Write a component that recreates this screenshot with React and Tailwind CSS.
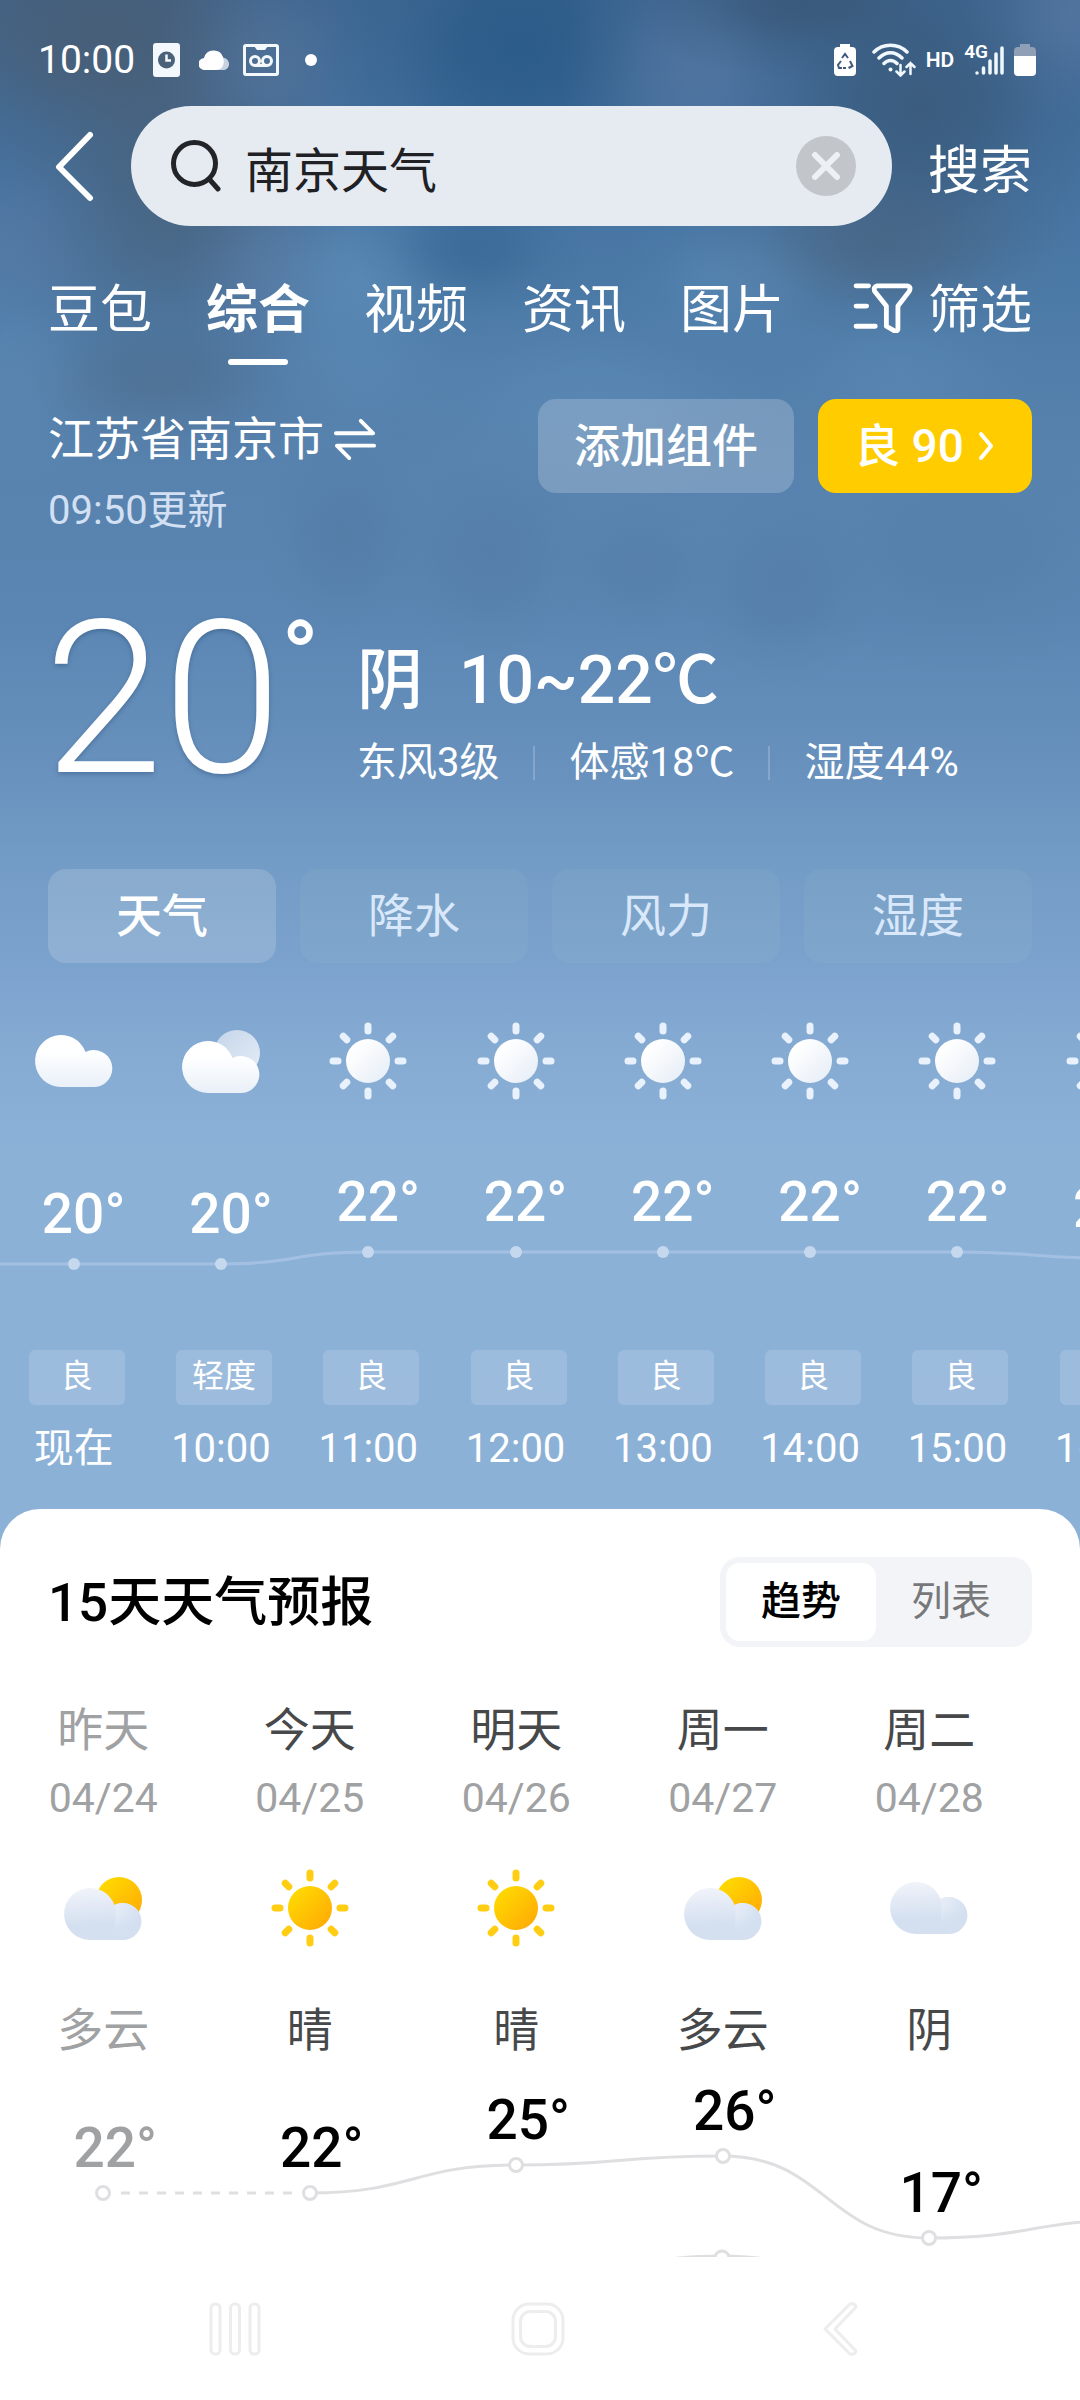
import React, { useState } from 'react';

const tabs = ['豆包', '综合', '视频', '资讯', '图片'];

const metrics = ['天气', '降水', '风力', '湿度'];

// drop: distance of the temperature from the top of the trend area
const hours = [
    { time: '现在', icon: 'cloud', temp: 20, air: '良', drop: 75 },
    { time: '10:00', icon: 'partly', temp: 20, air: '轻度', drop: 75 },
    { time: '11:00', icon: 'sun', temp: 22, air: '良', drop: 63 },
    { time: '12:00', icon: 'sun', temp: 22, air: '良', drop: 63 },
    { time: '13:00', icon: 'sun', temp: 22, air: '良', drop: 63 },
    { time: '14:00', icon: 'sun', temp: 22, air: '良', drop: 63 },
    { time: '15:00', icon: 'sun', temp: 22, air: '良', drop: 63 },
    { time: '16:00', icon: 'sun', temp: 21, air: '良', drop: 69 },
];

const days = [
    { name: '昨天', date: '04/24', icon: 'partly', text: '多云', high: 22, drop: 58, past: true },
    { name: '今天', date: '04/25', icon: 'sun', text: '晴', high: 22, drop: 58 },
    { name: '明天', date: '04/26', icon: 'sun', text: '晴', high: 25, drop: 30 },
    { name: '周一', date: '04/27', icon: 'partly', text: '多云', high: 26, drop: 21 },
    { name: '周二', date: '04/28', icon: 'cloud', text: '阴', high: 17, drop: 103 },
];

const Gradients = () => (
    <svg className="absolute h-0 w-0" aria-hidden="true">
        <defs>
            <linearGradient id="lightCloud" x1="0" y1="0" x2="0" y2="1">
                <stop offset="0.3" stopColor="#ffffff" />
                <stop offset="1" stopColor="#e9f0f8" />
            </linearGradient>
            <linearGradient id="lightSun" x1="0" y1="0" x2="1" y2="1">
                <stop offset="0.2" stopColor="#ffffff" />
                <stop offset="1" stopColor="#e4ecf6" />
            </linearGradient>
            <linearGradient id="lightMoon" x1="0" y1="0" x2="1" y2="1">
                <stop offset="0" stopColor="#c3d5ea" />
                <stop offset="1" stopColor="#e6edf6" />
            </linearGradient>
            <linearGradient id="colorCloud" x1="0.3" y1="0" x2="0.4" y2="1">
                <stop offset="0" stopColor="#f1f3fa" />
                <stop offset="0.7" stopColor="#d4e0f0" />
            </linearGradient>
            <linearGradient id="colorLobe" x1="0" y1="0.2" x2="0.7" y2="0.8">
                <stop offset="0" stopColor="#e6ecf7" />
                <stop offset="0.9" stopColor="#d2dfef" />
            </linearGradient>
            <linearGradient id="colorSun" x1="0.1" y1="0.1" x2="0.9" y2="0.9">
                <stop offset="0" stopColor="#ffdb00" />
                <stop offset="1" stopColor="#ffab06" />
            </linearGradient>
            <linearGradient id="lobeFade" x1="0" y1="0" x2="0" y2="1">
                <stop offset="0.3" stopColor="#ffffff" />
                <stop offset="0.8" stopColor="#000000" />
            </linearGradient>
            <mask id="lobeMask">
                <rect x="44" y="34" width="50" height="42" fill="url(#lobeFade)" />
            </mask>
        </defs>
    </svg>
);

const CLOUD = 'M35 74a26 26 0 1 1 24.5-35a18.5 18.5 0 1 1 9 35z';

const WeatherIcon = ({ name, color }) => (
    <svg className="h-24 w-24 shrink-0" viewBox="0 0 96 96" aria-hidden="true">
        {name === 'sun' && (
            <g>
                <circle cx="48" cy="48" r="22" fill={color ? 'url(#colorSun)' : 'url(#lightSun)'} />
                <g stroke={color ? '#ffce12' : '#e8f1fc'} strokeWidth="7" strokeLinecap="round">
                    {[0, 45, 90, 135, 180, 225, 270, 315].map((deg) => (
                        <path key={deg} d="M48 13v5" transform={`rotate(${deg} 48 48)`} />
                    ))}
                </g>
            </g>
        )}
        {name === 'partly' && <circle cx="64" cy="40" r="23" fill={color ? 'url(#colorSun)' : 'url(#lightMoon)'} />}
        {name !== 'sun' && (
            <g transform={name === 'partly' ? 'translate(0 6)' : undefined}>
                <path d={CLOUD} fill={color ? 'url(#colorCloud)' : 'url(#lightCloud)'} />
                {color && <path d="M59.5 39a18.5 18.5 0 1 1 9 35c-8 0-9-8-8.5-20a30 30 0 0 0-.5-15z" fill="url(#colorLobe)" mask="url(#lobeMask)" />}
            </g>
        )}
    </svg>
);

const Sky = () => (
    <svg className="absolute inset-x-0 top-0 h-[900px] w-full" viewBox="0 0 1080 900" preserveAspectRatio="none" aria-hidden="true">
        <defs>
            {[
                ['skyGrey', '#4a5a6c'],
                ['skyDeep', '#235583'],
                ['skyDark', '#375472'],
                ['skyHaze', '#6280a8'],
                ['skyLight', '#6393bf'],
            ].map(([id, c]) => (
                <radialGradient key={id} id={id}>
                    <stop offset="0" stopColor={c} stopOpacity="0.7" />
                    <stop offset="0.3" stopColor={c} stopOpacity="0.55" />
                    <stop offset="0.65" stopColor={c} stopOpacity="0.18" />
                    <stop offset="1" stopColor={c} stopOpacity="0" />
                </radialGradient>
            ))}
        </defs>
        <ellipse cx="100" cy="30" rx="260" ry="170" fill="url(#skyGrey)" />
        <ellipse cx="170" cy="190" rx="190" ry="220" fill="url(#skyGrey)" opacity="0.8" />
        <ellipse cx="10" cy="250" rx="120" ry="110" fill="url(#skyHaze)" opacity="0.5" />
        <ellipse cx="265" cy="60" rx="110" ry="110" fill="url(#skyHaze)" opacity="0.5" />
        <ellipse cx="520" cy="50" rx="200" ry="190" fill="url(#skyDeep)" />
        <ellipse cx="690" cy="70" rx="130" ry="130" fill="url(#skyHaze)" opacity="0.6" />
        <ellipse cx="920" cy="110" rx="200" ry="190" fill="url(#skyDark)" />
        <ellipse cx="800" cy="0" rx="180" ry="80" fill="url(#skyDark)" />
        <ellipse cx="1075" cy="10" rx="110" ry="110" fill="url(#skyHaze)" opacity="0.7" />
        <ellipse cx="265" cy="270" rx="90" ry="110" fill="url(#skyHaze)" opacity="0.6" />
        <ellipse cx="360" cy="280" rx="120" ry="110" fill="url(#skyLight)" opacity="0.8" />
        <ellipse cx="470" cy="250" rx="120" ry="70" fill="url(#skyDeep)" opacity="0.5" />
        <ellipse cx="740" cy="280" rx="130" ry="80" fill="url(#skyLight)" opacity="0.6" />
        <ellipse cx="880" cy="245" rx="190" ry="100" fill="url(#skyGrey)" opacity="0.6" />
        <ellipse cx="20" cy="380" rx="110" ry="110" fill="url(#skyLight)" opacity="0.6" />
        <ellipse cx="160" cy="385" rx="200" ry="80" fill="url(#skyGrey)" opacity="0.4" />
        <ellipse cx="350" cy="370" rx="150" ry="80" fill="url(#skyLight)" opacity="0.4" />
        <ellipse cx="590" cy="400" rx="200" ry="110" fill="url(#skyLight)" opacity="0.5" />
        <ellipse cx="900" cy="370" rx="140" ry="80" fill="url(#skyLight)" opacity="0.4" />
        <ellipse cx="345" cy="540" rx="90" ry="100" fill="url(#skyDark)" opacity="0.2" />
        <ellipse cx="490" cy="560" rx="110" ry="100" fill="url(#skyDark)" opacity="0.18" />
        <ellipse cx="640" cy="570" rx="100" ry="70" fill="url(#skyDark)" opacity="0.14" />
        <ellipse cx="780" cy="590" rx="100" ry="100" fill="url(#skyDark)" opacity="0.18" />
        <ellipse cx="960" cy="560" rx="200" ry="120" fill="url(#skyDark)" opacity="0.12" />
    </svg>
);

const StatusBar = () => (
    <div className="flex items-center justify-between pt-10 pr-11 pb-[26px] pl-[38px]">
        <div className="flex h-10 items-center">
            <span className="w-[115px] text-[39px] leading-10">10:00</span>
            <svg className="h-[34px] w-[27px]" viewBox="0 0 27 34" aria-hidden="true">
                <rect width="27" height="34" rx="3" fill="#f3f8fd" />
                <circle cx="13.5" cy="17" r="8.5" fill="#4a6179" />
                <path d="M13.5 11.5v6h4.5" stroke="#f3f8fd" strokeWidth="2.5" fill="none" />
            </svg>
            <svg className="ml-[19px] h-5 w-[30px]" viewBox="0 0 30 20" aria-hidden="true">
                <path d="M20 8c6-2 10 2 10 6s-3 6-6 6h-9z" fill="#c8d3e2" />
                <path d="M6 20a6 6 0 0 1-1-12a10 10 0 0 1 19-1c2 7 0 13-8 13z" fill="#fff" />
            </svg>
            <svg className="ml-3.5 h-8 w-9" viewBox="0 0 36 32" fill="none" stroke="#f3f8fd" strokeWidth="3" aria-hidden="true">
                <rect x="1.5" y="1.5" width="33" height="29" rx="1.5" />
                <path d="M11 2l3 4h8l3-4" fill="#f3f8fd" stroke="none" />
                <circle cx="12" cy="17" r="4.5" />
                <circle cx="24" cy="17" r="4.5" />
                <path d="M12 21.5h12" />
            </svg>
            <span className="ml-[26px] h-3 w-3 rounded-full bg-white"></span>
        </div>
        <div className="flex h-10 items-center">
            <svg className="h-8 w-[22px]" viewBox="0 0 22 32" aria-hidden="true">
                <path d="M6 0h10v3h2a4 4 0 0 1 4 4v21a4 4 0 0 1-4 4H4a4 4 0 0 1-4-4V7a4 4 0 0 1 4-4h2z" fill="#fff" />
                <path d="M8 14l3-4l3 4M16 17l2.5 5l-4 2M8 24H5l-1-3l3-4M9 24h3" fill="none" stroke="#41597a" strokeWidth="2" />
            </svg>
            <svg className="ml-4 h-[34px] w-11" viewBox="0 0 44 34" fill="none" stroke="#f0f7fd" strokeWidth="3.5" strokeLinecap="round" aria-hidden="true">
                <path d="M2 9C11 0 26 0 35 9M7 15C14 8 23 8 30 15M12 20.5c4-4 9-4 13 0" />
                <circle cx="18.5" cy="26.5" r="2" fill="#f0f7fd" stroke="none" />
                <path d="M28.5 22v10M24.5 28.5l4 4l4-4M38.5 31V20M34.5 24l4-4l4 4" strokeWidth="2.5" />
            </svg>
            <span className="ml-2.5 text-[21px] leading-6 font-semibold">HD</span>
            <span className="ml-2.5 self-start text-[19px] leading-6 font-semibold">4G</span>
            <svg className="-ml-3.5 h-8 w-[30px]" viewBox="0 0 30 32" stroke="#f0f7fd" strokeWidth="3.5" strokeLinecap="round" aria-hidden="true">
                <path d="M3 29v0M9.5 29v-5M16 29v-12M22 29v-19M28 29v-25" />
            </svg>
            <svg className="ml-2.5 h-8 w-[22px]" viewBox="0 0 22 32" aria-hidden="true">
                <path d="M6 0h10v3h2a4 4 0 0 1 4 4v6H0V7a4 4 0 0 1 4-4h2z" fill="#8fa0b6" />
                <path d="M0 12h22v16a4 4 0 0 1-4 4H4a4 4 0 0 1-4-4z" fill="#fff" />
            </svg>
        </div>
    </div>
);

const SearchRow = () => {
    const [query, setQuery] = useState('南京天气');

    return (
        <form className="flex items-center pr-12 pl-[54px]" onSubmit={(e) => e.preventDefault()}>
            <button type="button" aria-label="返回" className="w-[77px] shrink-0">
                <svg className="h-[72px] w-10" viewBox="0 0 40 72" fill="none" stroke="#fff" strokeWidth="6" strokeLinecap="round" strokeLinejoin="round">
                    <path d="M36 5L5 37l31 31" />
                </svg>
            </button>
            <div className="flex h-[120px] min-w-0 flex-1 items-center rounded-full bg-[#e6ebf2] pr-9 pl-10">
                <label htmlFor="query" aria-label="搜索内容">
                    <svg className="h-[52px] w-[52px]" viewBox="0 0 52 52" fill="none" stroke="#222428" strokeWidth="5" strokeLinecap="round">
                        <circle cx="23.5" cy="23.5" r="21" />
                        <path d="M39 40l8 9" />
                    </svg>
                </label>
                <input
                    id="query"
                    type="text"
                    value={query}
                    onChange={(e) => setQuery(e.target.value)}
                    className="ml-[22px] h-18 min-w-0 flex-1 bg-transparent pt-0.5 text-[48px] leading-16 text-[#1f2124] outline-none"
                />
                <button type="button" aria-label="清除" onClick={() => setQuery('')}>
                    <svg className="h-[60px] w-[60px]" viewBox="0 0 60 60">
                        <circle cx="30" cy="30" r="30" fill="#c2c6cb" />
                        <path d="M19 19l22 22M41 19L19 41" stroke="#edf1f6" strokeWidth="6" strokeLinecap="round" />
                    </svg>
                </button>
            </div>
            <button type="submit" className="ml-9 pt-3 text-[52px] leading-[60px]">搜索</button>
        </form>
    );
};

const TabRow = () => {
    const [active, setActive] = useState('综合');

    return (
        <nav className="mt-[55px] flex items-start justify-between px-12">
            <div className="flex gap-[54px]">
                {tabs.map((tab) => (
                    <button key={tab} onClick={() => setActive(tab)} className={`flex flex-col items-center text-[52px] leading-[60px] ${tab === active ? 'font-bold' : ''}`}>
                        {tab}
                        <span className={`mt-[18px] h-1.5 w-[60px] rounded-full ${tab === active ? 'bg-white' : ''}`}></span>
                    </button>
                ))}
            </div>
            <button className="flex items-center gap-3.5 text-[52px] leading-[60px]">
                <svg className="mb-2 h-[52px] w-[62px]" viewBox="0 0 62 54" fill="none" stroke="#fff" strokeWidth="5" strokeLinecap="round" strokeLinejoin="round" aria-hidden="true">
                    <path d="M3 5h13M3 26h11M3 47h20" />
                    <path d="M25 5h31q5 1 2 6L46.5 26v24q-1 3-4 1.5L34.5 47V26L22.5 11q-2-5 2.5-6z" />
                </svg>
                筛选
            </button>
        </nav>
    );
};

const Current = () => (
    <section>
        <div className="mt-[34px] flex items-start px-12">
            <div className="flex-1 pt-2.5">
                <button className="flex items-center gap-2.5 text-[46px] leading-[60px]">
                    江苏省南京市
                    <svg className="h-11 w-[42px]" viewBox="0 0 44 46" fill="none" stroke="#fff" strokeWidth="4" strokeLinecap="round" strokeLinejoin="round" aria-hidden="true">
                        <path d="M2 17h39L28 4M42 30H3l13 13" />
                    </svg>
                </button>
                <p className="mt-3 text-[40px] leading-[60px] text-[#d3e0f3]">09:50更新</p>
            </div>
            <button className="h-[94px] rounded-[18px] bg-white/20 px-9 text-[46px] leading-[60px] font-medium">添加组件</button>
            <a href="#air" className="ml-6 flex h-[94px] w-[214px] items-center justify-center rounded-[18px] bg-[#ffcc00] text-[46px] leading-[60px] font-medium">
                良 90
                <svg className="ml-3 h-8 w-5" viewBox="0 0 20 32" fill="none" stroke="#fff" strokeWidth="4" strokeLinecap="round" strokeLinejoin="round" aria-hidden="true">
                    <path d="M5 4l10 12L5 28" />
                </svg>
            </a>
        </div>
        <div className="mt-[78px] flex items-start px-12">
            <p className="flex w-[309px] items-start text-[214px] leading-[160px] font-light text-shadow-[0_2px_4px_rgb(30_60_100_/_0.35)]">
                <span className="-ml-1">20</span>
                <span className="text-[98px] leading-[76px] font-medium text-shadow-none">°</span>
            </p>
            <div className="pt-[22px]">
                <p className="flex gap-9 text-[66px] leading-20 font-medium">
                    <span>阴</span>
                    <span>10~22℃</span>
                </p>
                <p className="mt-[18px] flex items-center gap-[34px] text-[40px] leading-12">
                    <span>东风3级</span>
                    <span className="h-[34px] w-0.5 bg-white/20"></span>
                    <span>体感18℃</span>
                    <span className="h-[34px] w-0.5 bg-white/20"></span>
                    <span>湿度44%</span>
                </p>
            </div>
        </div>
    </section>
);

const MetricRow = () => {
    const [active, setActive] = useState('天气');

    return (
        <div className="mt-[82px] grid grid-cols-4 gap-6 px-12">
            {metrics.map((metric) => (
                <button
                    key={metric}
                    onClick={() => setActive(metric)}
                    className={`h-[94px] rounded-[18px] text-[46px] leading-[60px] ${metric === active ? 'bg-[#ecf4f4]/18 font-medium text-white' : 'bg-[#9cc0c8]/14 text-[#d9e8fa]'}`}
                >
                    {metric}
                </button>
            ))}
        </div>
    );
};

const Hourly = () => (
    <section className="relative mt-[50px] overflow-hidden pb-8">
        <svg className="absolute inset-x-0 top-[224px] h-10 w-full" viewBox="0 0 1080 40" preserveAspectRatio="none" fill="none" aria-hidden="true">
            <path d="M0 27H221C295 27 295 15 368 15H958C1032 15 1032 21 1105 21" stroke="#a3c0e3" strokeWidth="3" />
        </svg>
        <ul className="relative flex">
            {hours.map((hour) => (
                <li key={hour.time} className="flex w-[13.64%] shrink-0 flex-col items-center">
                    <WeatherIcon name={hour.icon} />
                    <div className="flex h-[241px] flex-col items-center" style={{ paddingTop: hour.drop }}>
                        <span className="pl-5 text-[55px] leading-[60px] font-medium">{hour.temp}°</span>
                        <span className="mt-3.5 h-3 w-3 rounded-full bg-[#c6d8ee]"></span>
                    </div>
                    <span className="ml-1.5 flex h-[55px] w-24 items-center justify-center rounded-md bg-white/15 pb-1 text-[32px] leading-10">{hour.air}</span>
                    <span className="mt-4 text-[40px] leading-14">{hour.time}</span>
                </li>
            ))}
        </ul>
    </section>
);

const Daily = () => {
    const [view, setView] = useState('趋势');

    return (
        <section className="flex-1 rounded-t-[40px] bg-white pt-12 text-[#47484a]">
            <div className="flex items-center justify-between px-12">
                <h2 className="pt-0.5 text-[53px] leading-[60px] font-medium text-black">15天天气预报</h2>
                <div className="flex h-[90px] rounded-[20px] bg-[#f3f4f7] p-1.5">
                    {['趋势', '列表'].map((item) => (
                        <button
                            key={item}
                            onClick={() => setView(item)}
                            className={`w-[150px] rounded-[14px] text-[40px] leading-12 ${item === view ? 'bg-white font-medium text-black' : 'text-[#77787a]'}`}
                        >
                            {item}
                        </button>
                    ))}
                </div>
            </div>
            <div className="relative mt-[53px] overflow-hidden">
                <svg className="absolute inset-x-0 bottom-0 h-[197px] w-full" viewBox="0 0 1080 197" preserveAspectRatio="none" fill="none" stroke="#dfdfe2" strokeWidth="3" aria-hidden="true">
                    <path d="M121 133H298" strokeDasharray="9 9" />
                    <path d="M309 133C413 133 413 105 516 105C619 105 619 96 722 96C826 96 826 178 929 178C1032 178 1032 160 1136 160" />
                    <path d="M516 213C640 213 640 196 722 196C800 196 800 219 929 219" />
                    <circle cx="722" cy="198" r="7" fill="#fff" />
                </svg>
                <ul className="relative flex">
                    {days.map((day) => (
                        <li key={day.date} className={`flex w-[19.12%] shrink-0 flex-col items-center ${day.past ? 'text-[#a0a1a3]' : ''}`}>
                            <span className="text-[46px] leading-[60px]">{day.name}</span>
                            <span className="mt-3.5 text-[41px] leading-12 text-[#a0a1a3]">{day.date}</span>
                            <div className="mt-[38px]">
                                <WeatherIcon name={day.icon} color />
                            </div>
                            <span className="mt-11 text-[46px] leading-[60px]">{day.text}</span>
                            <div className="flex h-[197px] flex-col items-center" style={{ paddingTop: day.drop }}>
                                <span className={`pl-6 text-[55px] leading-[60px] font-medium ${day.past ? '' : 'text-black'}`}>{day.high}°</span>
                                <span className="mt-[7px] h-4 w-4 shrink-0 rounded-full border-3 border-[#dfdfe2] bg-white"></span>
                            </div>
                        </li>
                    ))}
                </ul>
            </div>
        </section>
    );
};

const SystemNav = () => (
    <div className="grid h-36 grid-cols-3 items-center justify-items-center bg-white pr-[88px] pl-[84px]">
        <button aria-label="最近任务">
            <svg className="h-14 w-14" viewBox="0 0 56 56" fill="none" stroke="#ededed" strokeWidth="3">
                <rect x="4" y="3" width="9" height="50" rx="4" />
                <rect x="23.5" y="3" width="9" height="50" rx="4" />
                <rect x="43" y="3" width="9" height="50" rx="4" />
            </svg>
        </button>
        <button aria-label="主页">
            <svg className="h-14 w-14" viewBox="0 0 56 56" fill="none" stroke="#ededed" strokeWidth="3">
                <rect x="3" y="3" width="50" height="50" rx="16" />
                <rect x="10.5" y="10.5" width="35" height="35" rx="10" />
            </svg>
        </button>
        <button aria-label="返回上一页">
            <svg className="h-14 w-14" viewBox="0 0 56 56" fill="none" stroke="#ededed" strokeWidth="3" strokeLinejoin="round">
                <path d="M37 3q5-1 6 3L22 28l21 22q-1 4-6 3L12 28z" />
            </svg>
        </button>
    </div>
);

export default function App() {
    return (
        <div className="relative flex min-h-screen flex-col overflow-hidden bg-[#8cb1d7] font-['Roboto','Noto_Sans_CJK_SC',sans-serif] text-white">
            <div className="absolute inset-x-0 top-0 h-[1508px] bg-[linear-gradient(180deg,#3f6894_0px,#44719f_150px,#4c7aa7_300px,#5782ae_450px,#5b86b3_620px,#6891bd_770px,#729bc5_860px,#7ba2cd_960px,#85abd3_1050px,#8bb1d7_1150px,#8cb1d7_1508px)]"></div>
            <Gradients />
            <Sky />
            <header className="relative">
                <StatusBar />
                <SearchRow />
                <TabRow />
            </header>
            <main className="relative flex flex-1 flex-col">
                <Current />
                <MetricRow />
                <Hourly />
                <Daily />
            </main>
            <SystemNav />
        </div>
    );
}
